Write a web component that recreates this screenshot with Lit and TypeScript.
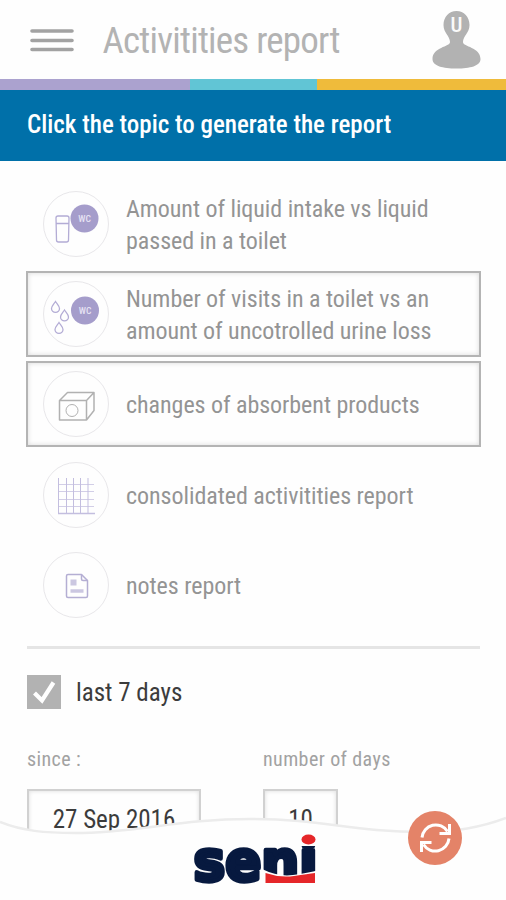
import { LitElement, html, css, svg } from "lit";
import { customElement } from "lit/decorators.js";
import { classMap } from "lit/directives/class-map.js";

const wc = (cx: number, cy: number) => svg`
  <circle cx=${cx} cy=${cy} r="14" fill="#a59dcb"/>
  <text x=${cx} y=${cy + 3} text-anchor="middle" textLength="12.5" lengthAdjust="spacingAndGlyphs" font-size="8.5" font-weight="500" fill="#e6e2f3">WC</text>`;

const drop = (x: number, y: number) => svg`
  <path transform="translate(${x} ${y})" d="M0-5.500C2-2.500 4-1 4 1.500A4 3.800 0 0 1-4 1.500C-4-1-2-2.500 0-5.500Z"/>`;

const icons: Record<string, unknown> = {
  glass: svg`
    <g fill="none" stroke="#b3acd5" stroke-width="1.300"><path d="M16 26q0-2 2-2h9q2 0 2 2l-.5 22q0 2-2 2h-8q-2 0-2-2ZM16 31.500h13"/></g>
    ${wc(44.500, 26.500)}`,
  drops: svg`
    <g fill="none" stroke="#b3acd5" stroke-width="1.300">${drop(15.500, 25)}${drop(24.500, 33.500)}${drop(19, 46)}</g>
    ${wc(45, 28.500)}`,
  box: svg`
    <g fill="none" stroke="#b1b1b1" stroke-width="1.500" stroke-linejoin="round">
      <path d="M19.500 28.500h27v19.500h-27ZM19.500 28.500l8-8h26.500l-7.500 8M54 20.500v18l-7.500 9.500"/>
      <circle cx="32" cy="38.500" r="6" stroke-width="1"/>
    </g>`,
  grid: svg`
    <g fill="none" stroke="#c3bedf" stroke-width="1">
      <path d="M18.500 15v36M26.500 15v36M33.500 15v36M40.500 15v36M48 15v36"/>
      <path stroke-opacity=".75" d="M18 21.500h36M18 28.500h36M18 36.500h36M18 43.500h36"/>
      <path stroke-width="1.300" d="M18 50.500h37"/>
    </g>`,
  note: svg`
    <g transform="translate(-.5 -1)" fill="none" stroke="#b4aed3" stroke-width="1.500">
      <path stroke-linejoin="round" d="M28.500 22.500h13.500l6 6v15.500q0 1.500-1.500 1.500h-18q-1.500 0-1.500-1.500v-20q0-1.500 1.500-1.500Z"/>
      <path d="M42 22.500v4.500q0 1.500 1.500 1.500h4.500"/>
      <path stroke-width="3.500" stroke="#cbc7e1" d="M31 39h13"/>
      <path stroke-width="6" stroke="#cbc7e1" d="M31 30.500h6"/>
    </g>`,
};

const topics = [
  { icon: "glass", lines: ["Amount of liquid intake vs liquid", "passed in a toilet"], framed: false },
  { icon: "drops", lines: ["Number of visits in a toilet vs an", "amount of uncotrolled urine loss"], framed: true },
  { icon: "box", lines: ["changes of absorbent products"], framed: true },
  { icon: "grid", lines: ["consolidated activitities report"], framed: false },
  { icon: "note", lines: ["notes report"], framed: false },
];

@customElement("app-root")
export class AppRoot extends LitElement {
  static styles = css`
    :host { display: block; position: relative; height: 900px; overflow: hidden; background: #fefefe;
      font-family: "Roboto Condensed", Roboto, sans-serif; font-stretch: 75%; white-space: nowrap; }
    * { box-sizing: border-box; }
    svg { display: block; overflow: visible; }
    .header { display: flex; align-items: center; height: 79px; padding: 0 25px 0 30px; }
    .menu { width: 44px; height: 26px; margin-right: 28.500px; }
    .title { flex: 1; font-size: 37px; color: #b3b3b3; line-height: 44px; letter-spacing: -.78px; padding-top: 2px; font-weight: 400; }
    .user { width: 49px; height: 58px; }
    .stripes { display: grid; grid-template-columns: 190px 127px 1fr; height: 11px; }
    .lilac { background: #aba2cf; } .aqua { background: #61c5d5; } .gold { background: #efbb3b; }
    .banner { height: 71px; background: #0070a9; color: #fff; padding-left: 27px; font-size: 25px; line-height: 70px; font-weight: 500; }
    .topics { padding: 20.300px 25px 0 26px; display: grid; grid-auto-rows: 86px; row-gap: 4.100px; }
    .topic { display: flex; align-items: center; gap: 17px; padding: 0 15px; border: 2px solid transparent; color: #949494; font-size: 24px; line-height: 32px; letter-spacing: -.05px; }
    .copy { padding-top: 2px; }
    .framed { border-color: #b4b4b4; box-shadow: inset 0 0 5px #dadada; }
    .disc { width: 66px; height: 66px; border: 1px solid #e8e7ea; border-radius: 50%; flex: none; }
    .rule { height: 3px; background: #e5e5e5; margin: 18.300px 26px 0 27px; }
    .check { display: flex; align-items: center; gap: 15px; margin: 26px 0 0 27px; height: 34px; font-size: 25px; color: #3c3c3c; }
    .check span { padding-top: 2px; }
    .tick { width: 34px; height: 34px; background: #b2b2b2; }
    .fields { display: grid; grid-template-columns: 236px 1fr; padding: 38px 27px 0; }
    .label { font-size: 20px; line-height: 24px; color: #a2a2a2; letter-spacing: .4px; margin-bottom: 18px; }
    .input { height: 62px; border: 2px solid #d1d1d1; box-shadow: inset 0 0 4px #ddd; color: #3c3c3c; font-size: 25px; line-height: 58px; text-align: center; }
    .date { width: 174px; } .days { width: 75px; }
    .footer { position: absolute; left: 0; bottom: 0; width: 506px; height: 90px; }
    .logo { font: 700 56px "DejaVu Sans", sans-serif; fill: #07193f; stroke: #07193f; stroke-width: 4.500px; stroke-linejoin: round; }
  `;

  render() {
    return html`
      <div class="header">
        <svg class="menu" viewBox="0 0 44 26"><path d="M2 4h40M2 13.500h40M2 22.500h40" stroke="#a2a2a2" stroke-width="3.600" stroke-linecap="round"/></svg>
        <div class="title"><span>Activitities report</span></div>
        <svg class="user" viewBox="0 0 49 58">
          <path fill="#b2b2b2" d="M24.500 0C32 0 37.500 6 37.500 14C37.500 22 31 25 31 31C31 36 48.500 36 48.500 48C48.500 55 38 57.500 24.500 57.500S.5 55 .5 48C.5 36 18 36 18 31C18 25 11.500 22 11.500 14C11.500 6 17 0 24.500 0Z"/>
          <text x="24.500" y="21" text-anchor="middle" fill="#fafafa" font-size="21" font-weight="500">U</text>
        </svg>
      </div>
      <div class="stripes"><div class="lilac"></div><div class="aqua"></div><div class="gold"></div></div>
      <div class="banner"><span>Click the topic to generate the report</span></div>
      <div class="topics">
        ${topics.map(t => html`
          <div class=${classMap({ topic: true, framed: t.framed })}>
            <div class="disc"><svg width="64" height="64" viewBox="4 0 64 64">${icons[t.icon]}</svg></div>
            <div class="copy">${t.lines.map(l => html`<div><span>${l}</span></div>`)}</div>
          </div>`)}
      </div>
      <div class="rule"></div>
      <div class="check">
        <svg class="tick" viewBox="0 0 34 34"><path d="M7.500 18l7.500 7.500L26.500 7.500" fill="none" stroke="#fff" stroke-width="4.200"/></svg>
        <span>last 7 days</span>
      </div>
      <div class="fields">
        <div><div class="label">since :</div><div class="input date">27 Sep 2016</div></div>
        <div><div class="label">number of days</div><div class="input days">10</div></div>
      </div>
      <svg class="footer" viewBox="0 810 506 90">
        <path fill="#fefefe" d="M0 822C22 831 45 833 75 833C135 833 180 819 250 819C325 819 350 832 425 832C460 832 485 826 506 818V900H0Z"/>
        <path fill="none" stroke="#ececec" stroke-width="2.500" d="M0 822C22 831 45 833 75 833C135 833 180 819 250 819C325 819 350 832 425 832C460 832 485 826 506 818"/>
        <text class="logo" x="193.500" y="880" textLength="124" lengthAdjust="spacingAndGlyphs">seni</text>
        <path fill="#fefefe" d="M262 869Q278 877 293 875T319 870V886H262ZM299 828h22v18h-22Z"/>
        <path fill="#e52629" d="M265.500 873Q280 878 294 876T315 873V883H265.500Z"/>
        <ellipse cx="308.500" cy="839.500" rx="7" ry="5" fill="#e52629"/>
        <circle cx="435" cy="838" r="27" fill="#e48368"/>
        <g fill="none" stroke="#fff" stroke-width="3">
          <path d="M422 837.500A13.800 13.800 0 0 1 447.500 831.500M449 838.500A13.800 13.800 0 0 1 423.500 844.500"/>
          <path d="M449.500 824v9.500h-10M421.500 852v-9.500h10"/>
        </g>
      </svg>`;
  }
}
